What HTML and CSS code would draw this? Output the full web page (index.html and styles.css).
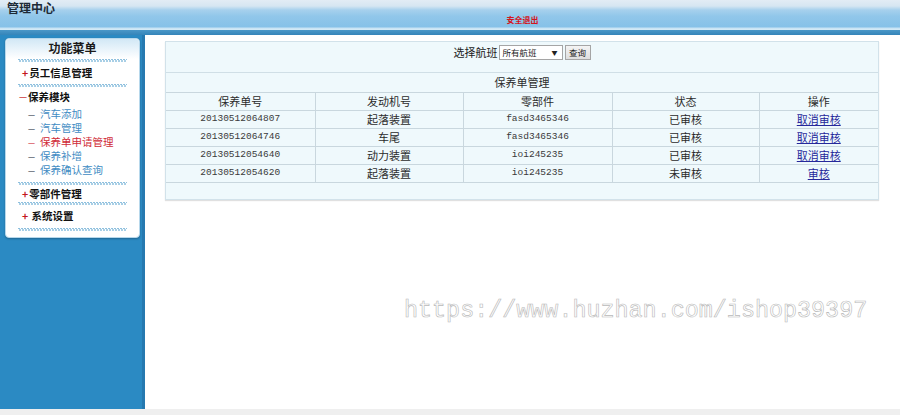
FILE: index.html
```html
<!DOCTYPE html>
<html lang="zh-CN">
<head>
<meta charset="utf-8">
<title>管理中心</title>
<link rel="stylesheet" href="styles.css">
</head>
<body>
<div class="page">
  <header class="top">
    <div class="brand">管理中心</div>
    <div class="top-row">
      <span></span>
      <a class="logout" href="#">安全退出</a>
    </div>
  </header>
  <div class="strip"></div>

  <div class="main">
    <aside class="side">
      <nav class="menu">
        <div class="menu-title">功能菜单</div>
        <div class="sep"></div>
        <div class="grp grp-a"><b class="plus">+</b>员工信息管理</div>
        <div class="sep"></div>
        <div class="grp grp-b"><b class="minus">一</b>保养模块</div>
        <ul class="subs">
          <li><span class="dash">一</span>汽车添加</li>
          <li><span class="dash">一</span>汽车管理</li>
          <li class="on"><span class="dash">一</span>保养单申请管理</li>
          <li><span class="dash">一</span>保养补增</li>
          <li><span class="dash">一</span>保养确认查询</li>
        </ul>
        <div class="sep"></div>
        <div class="grp grp-c"><b class="plus">+</b>零部件管理</div>
        <div class="sep"></div>
        <div class="grp grp-d"><b class="plus">+</b> 系统设置</div>
        <div class="sep"></div>
      </nav>
    </aside>

    <section class="content">
      <div class="panel">
        <form class="filter">
          <label class="filter-label">选择航班</label>
          <span class="sel">所有航班<i class="arrow">▼</i></span>
          <button type="button" class="btn">查询</button>
        </form>
        <table class="grid">
          <colgroup>
            <col class="c1"><col class="c2"><col class="c3"><col class="c4"><col class="c5">
          </colgroup>
          <tr class="caption-row"><td colspan="5">保养单管理</td></tr>
          <tr><td>保养单号</td><td>发动机号</td><td>零部件</td><td>状态</td><td>操作</td></tr>
          <tr><td class="num">20130512064807</td><td>起落装置</td><td class="num">fasd3465346</td><td>已审核</td><td><a href="#">取消审核</a></td></tr>
          <tr><td class="num">20130512064746</td><td>车尾</td><td class="num">fasd3465346</td><td>已审核</td><td><a href="#">取消审核</a></td></tr>
          <tr><td class="num">20130512054640</td><td>动力装置</td><td class="num">ioi245235</td><td>已审核</td><td><a href="#">取消审核</a></td></tr>
          <tr><td class="num">20130512054620</td><td>起落装置</td><td class="num">ioi245235</td><td>未审核</td><td><a href="#">审核</a></td></tr>
          <tr class="blank"><td colspan="5"></td></tr>
        </table>
      </div>
    </section>
  </div>
  <div class="foot"></div>

  <div class="wm">https://www.huzhan.com/ishop39397</div>
</div>
</body>
</html>
```

FILE: styles.css
```css
* { box-sizing: border-box; }

html, body {
  margin: 0;
  padding: 0;
  background: #fff;
}

body {
  font-family: "Noto Sans CJK SC", "Liberation Sans", sans-serif;
  color: #222;
  width: 900px;
  height: 415px;
  overflow: hidden;
}

.page {
  position: relative;
  width: 900px;
  height: 415px;
}

/* ---------- header ---------- */
.top {
  height: 30px;
  background: linear-gradient(to bottom,
    #e2ecf5 0, #d6e6f2 6px, #a6d0ed 10px, #91c7ea 16px, #86c1e8 27px,
    #c6e2f4 28px, #d6ebf7 30px);
}

.brand {
  padding: 1px 0 0 7px;
  height: 14px;
  font-size: 12px;
  line-height: 14px;
  font-weight: bold;
  color: #1d2a36;
}

.top-row {
  display: grid;
  grid-template-columns: 145px 1fr;
  height: 16px;
  align-items: center;
}

.logout {
  justify-self: center;
  font-size: 8px;
  line-height: 9px;
  font-weight: bold;
  color: #d4141c;
  text-decoration: none;
  margin-top: -5px;
}

.strip {
  height: 5px;
  background: linear-gradient(to bottom, #4a97c8, #3585b9);
}

/* ---------- layout ---------- */
.main {
  display: flex;
  height: 374px;
}

.side {
  width: 145px;
  flex: none;
  background: #2b8ac3;
  padding: 3px 5px 0 5px;
  border-right: 3px solid #2679b0;
}

.content {
  flex: 1;
  background: #fff;
  padding: 6px 21px 0 20px;
}

.foot {
  height: 6px;
  background: #efefef;
}

/* ---------- side menu ---------- */
.menu {
  width: 135px;
  height: 200px;
  background: #fff;
  border: 1px solid #b7d8ec;
  border-radius: 4px;
  box-shadow: 0 1px 2px rgba(0, 0, 0, 0.25);
  font-size: 10.5px;
}

.menu-title {
  height: 20px;
  line-height: 18px;
  text-align: center;
  font-size: 12px;
  font-weight: bold;
  color: #1a1a1a;
  background: linear-gradient(to bottom, #d2e8f6, #ffffff);
  border-radius: 4px 4px 0 0;
}

.sep {
  height: 3px;
  margin: 0 12px 0 12px;
  background:
    repeating-linear-gradient(90deg, #8fc0de 0 2px, transparent 2px 3px) top / 100% 1px no-repeat,
    repeating-linear-gradient(90deg, transparent 0 1px, #a8cfe6 1px 3px) bottom / 100% 2px no-repeat;
}

.grp {
  font-weight: bold;
  color: #111;
  padding-left: 16px;
}

.grp-a { height: 22px; line-height: 21px; }
.grp-b { height: 20px; line-height: 20px; padding-left: 13px; }
.grp-c { height: 17px; line-height: 17px; }
.grp-d { height: 23px; line-height: 22px; }

.plus {
  color: #c4161c;
  font-weight: bold;
  margin-right: 1px;
}

.minus {
  color: #c4161c;
  font-weight: normal;
  display: inline-block;
  width: 8px;
  font-size: 8px;
  margin-right: 1px;
}

.subs {
  list-style: none;
  margin: 0 0 5px 0;
  padding: 0 0 0 22px;
}

.subs li {
  height: 14px;
  line-height: 14px;
  color: #3f8cc3;
  white-space: nowrap;
}

.subs .dash {
  display: inline-block;
  width: 12px;
  font-size: 7px;
  color: #2f3a4a;
}

.subs li.on,
.subs li.on .dash {
  color: #cf2a36;
}

/* ---------- content panel ---------- */
.panel {
  width: 714px;
  border: 1px solid #d2e2ea;
  background: #eff9fc;
  box-shadow: 0 1px 1px rgba(0, 0, 0, 0.12);
}

.filter {
  height: 31px;
  margin: 0;
  padding-top: 2px;
  display: flex;
  justify-content: center;
  align-items: flex-start;
  font-size: 11px;
  line-height: 15px;
  border-bottom: 1px solid #d0dfe6;
}

.filter-label {
  color: #222;
  margin-top: 1px;
}

.sel {
  display: inline-flex;
  align-items: center;
  justify-content: space-between;
  width: 64px;
  height: 15px;
  margin: 1px 2px 0 1px;
  padding: 0 4px 0 3px;
  border: 1px solid #a5a5a5;
  background: #fff;
  font-size: 8.5px;
  color: #222;
}

.arrow {
  font-style: normal;
  font-size: 6px;
  color: #222;
}

.btn {
  height: 15px;
  width: 26px;
  margin-top: 1px;
  padding: 0;
  font-family: inherit;
  font-size: 8.5px;
  line-height: 13px;
  color: #222;
  border: 1px solid #a5a5a5;
  background: linear-gradient(#f4f4f4, #dedede);
}

.grid {
  width: 100%;
  border-collapse: collapse;
  table-layout: fixed;
  font-size: 11px;
  color: #2b2b2b;
}

.grid .c1 { width: 149px; }
.grid .c2 { width: 148px; }
.grid .c3 { width: 149px; }
.grid .c4 { width: 147px; }
.grid .c5 { width: auto; }

.grid td {
  height: 18px;
  padding: 0;
  text-align: center;
  line-height: 16px;
  border: 1px solid #c9d7de;
}

.grid tr:first-child td { border-top: 0; }
.grid td:first-child { border-left: 0; }
.grid td:last-child { border-right: 0; }

.grid .caption-row td { height: 19px; }

.grid .num {
  font-family: "Liberation Mono", "DejaVu Sans Mono", monospace;
  font-size: 9.5px;
  color: #3a3a3a;
}

.grid a {
  color: #26289a;
  text-decoration: underline;
}

.grid .blank td {
  height: 17px;
  border-bottom: 0;
}

/* ---------- watermark ---------- */
.wm {
  position: absolute;
  left: 404px;
  top: 297px;
  font-family: "Liberation Mono", "DejaVu Sans Mono", monospace;
  font-size: 23.4px;
  line-height: 28px;
  color: #fff;
  -webkit-text-stroke: 0.6px #b8b8b8;
  white-space: nowrap;
  pointer-events: none;
}
```
